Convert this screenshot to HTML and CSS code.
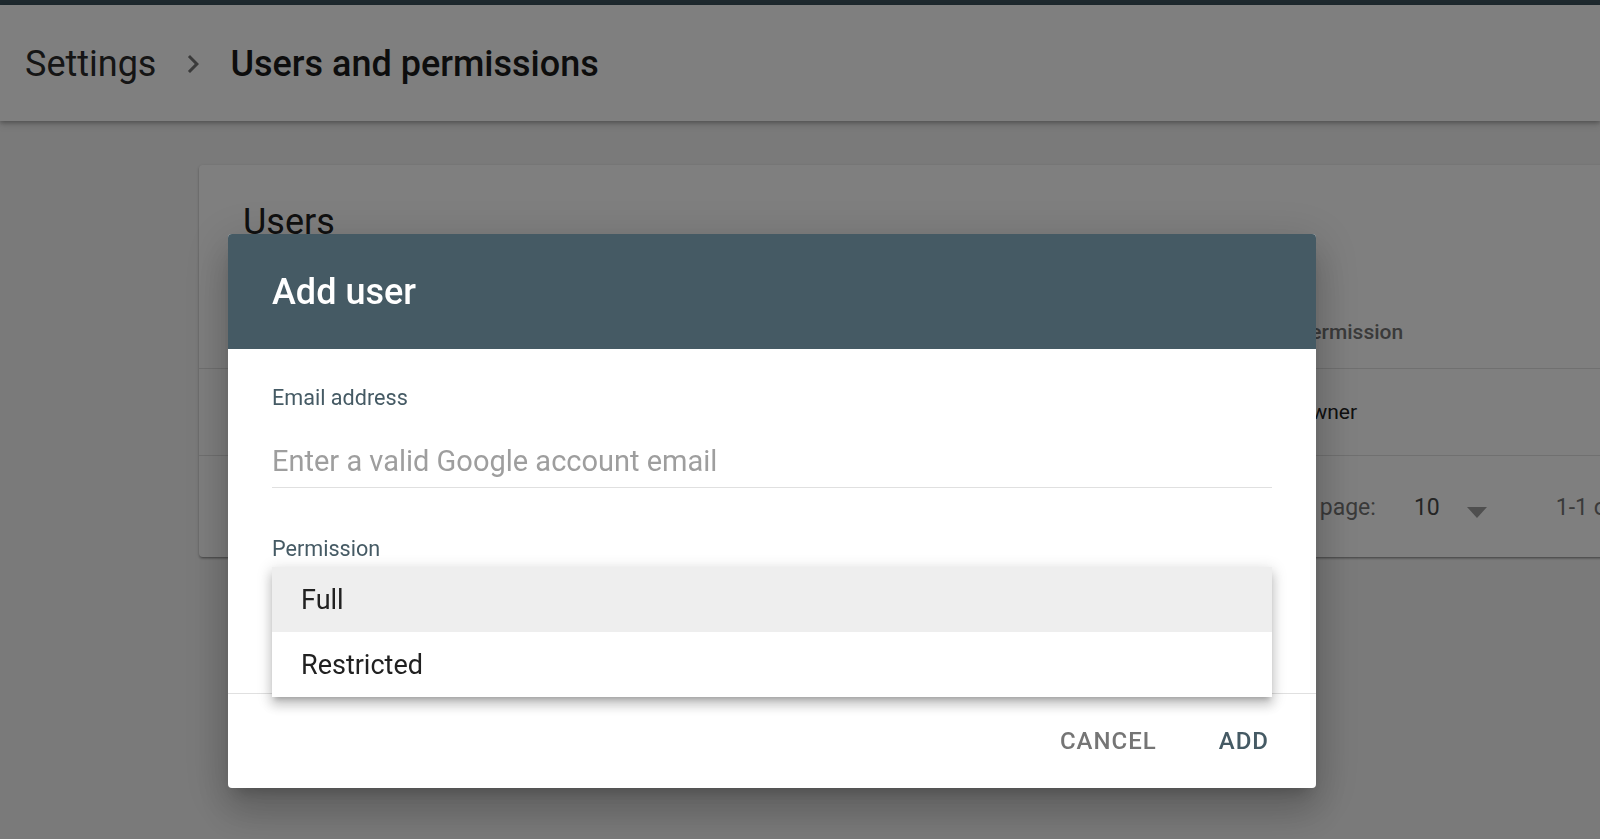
FILE: index.html
```html
<!DOCTYPE html>
<html lang="en">
<head>
<meta charset="utf-8">
<title>Users and permissions</title>
<link rel="stylesheet" href="styles.css">
</head>
<body>
<div class="app">
  <div class="topbar"></div>
  <header class="appbar">
    <span class="crumb">Settings</span>
    <svg class="crumb-sep" viewBox="0 0 24 24" width="36" height="36" aria-hidden="true"><path d="M10 6L8.59 7.41 13.17 12l-4.58 4.59L10 18l6-6z"/></svg>
    <span class="crumb current">Users and permissions</span>
  </header>
  <main class="content">
    <section class="card">
      <h2 class="card-title">Users</h2>
      <div class="table">
        <div class="row head"><span></span><span>Permission</span></div>
        <div class="row"><span></span><span>Owner</span></div>
      </div>
      <div class="table-footer">
        <span class="rows-label">Rows per page:</span>
        <span class="rows-value">10</span>
        <span class="rows-caret"></span>
        <span class="range">1-1 of 1</span>
        <svg class="pager" viewBox="0 0 24 24" width="36" height="36"><path d="M15.41 7.41L14 6l-6 6 6 6 1.41-1.41L10.83 12z"/></svg>
        <svg class="pager" viewBox="0 0 24 24" width="36" height="36"><path d="M10 6L8.59 7.41 13.17 12l-4.58 4.59L10 18l6-6z"/></svg>
      </div>
    </section>
  </main>
</div>

<div class="scrim"></div>

<div class="dialog-layer">
  <div class="dialog" role="dialog">
    <div class="dialog-header">Add user</div>
    <div class="dialog-body">
      <label class="field-label">Email address</label>
      <div class="input">Enter a valid Google account email</div>
      <label class="field-label perm-label">Permission</label>
      <div class="select-area"></div>
      <ul class="menu">
        <li class="menu-item active">Full</li>
        <li class="menu-item">Restricted</li>
      </ul>
    </div>
    <div class="dialog-footer">
      <button class="btn cancel">CANCEL</button>
      <button class="btn add">ADD</button>
    </div>
  </div>
</div>
</body>
</html>
```

FILE: styles.css
```css
* { box-sizing: border-box; }

html, body {
  margin: 0;
  padding: 0;
  width: 1600px;
  height: 839px;
  overflow: hidden;
  font-family: Roboto, "Liberation Sans", Arial, sans-serif;
  background: #f4f4f4;
  color: #212121;
}

.app {
  width: 1600px;
  height: 839px;
  display: flex;
  flex-direction: column;
  overflow: hidden;
}

.topbar {
  height: 5px;
  background: #3c535d;
  flex: none;
}

.appbar {
  height: 116px;
  flex: none;
  background: #ffffff;
  display: flex;
  align-items: center;
  padding: 2px 0 0 25px;
  box-shadow: 0 2px 4px rgba(0,0,0,0.25), 0 4px 8px rgba(0,0,0,0.1);
  position: relative;
  z-index: 1;
}

.crumb {
  font-size: 36px;
  line-height: 40px;
  color: #2b2b2b;
  font-weight: 400;
}

.crumb.current {
  font-weight: 500;
  color: #1a1a1a;
}

.crumb-sep {
  fill: #757575;
  margin: 0 19px 0 19px;
}

.content {
  flex: 1;
  padding: 44px 0 0 199px;
}

.card {
  width: 1572px;
  height: 392px;
  background: #ffffff;
  border-radius: 4px;
  box-shadow: 0 1px 3px rgba(0,0,0,0.2), 0 2px 2px rgba(0,0,0,0.14), 0 3px 1px -2px rgba(0,0,0,0.12);
  padding-top: 37px;
}

.card-title {
  margin: 0;
  padding-left: 44px;
  font-size: 36px;
  line-height: 40px;
  font-weight: 400;
  color: #212121;
}

.row {
  display: grid;
  grid-template-columns: 1054px 1fr;
  padding-left: 44px;
  border-bottom: 1px solid #e0e0e0;
  height: 87px;
  align-items: center;
  font-size: 21px;
  line-height: 24px;
  color: #212121;
}

.row.head {
  height: 127px;
  align-items: end;
  padding-bottom: 24px;
  font-weight: 500;
  color: #757575;
}

.table-footer {
  height: 101px;
  display: flex;
  align-items: center;
  padding-left: 1020px;
  padding-top: 2px;
  font-size: 23px;
  color: #757575;
  white-space: nowrap;
}

.rows-value {
  margin-left: 38px;
  color: #4a4a4a;
}

.rows-caret {
  margin-left: 27px;
  width: 0;
  height: 0;
  border-left: 10.5px solid transparent;
  border-right: 10.5px solid transparent;
  border-top: 11px solid #9e9e9e;
  margin-top: 10px;
}

.range {
  margin-left: 69px;
  color: #757575;
}

.pager {
  fill: #757575;
  margin-left: 30px;
  flex: none;
}

.scrim {
  position: fixed;
  inset: 0;
  background: rgba(0,0,0,0.5);
  z-index: 10;
}

.dialog-layer {
  position: fixed;
  inset: 0;
  z-index: 20;
  padding: 234px 0 0 228px;
}

.dialog {
  width: 1088px;
  background: #ffffff;
  border-radius: 4px;
  position: relative;
  box-shadow: 0 11px 15px -7px rgba(0,0,0,0.2), 0 24px 38px 3px rgba(0,0,0,0.14), 0 9px 46px 8px rgba(0,0,0,0.12);
}

.dialog-header {
  height: 115px;
  background: #455a64;
  color: #ffffff;
  border-radius: 4px 4px 0 0;
  display: flex;
  align-items: center;
  padding-left: 44px;
  font-size: 36px;
  font-weight: 500;
}

.dialog-body {
  padding: 37px 44px 0 44px;
  height: 344px;
}

.field-label {
  display: block;
  font-size: 21.6px;
  line-height: 24px;
  color: #455a64;
}

.input {
  margin-top: 31px;
  height: 47px;
  line-height: 40px;
  padding-bottom: 6px;
  border-bottom: 1px solid #e0e0e0;
  font-size: 29px;
  color: #9e9e9e;
}

.perm-label {
  margin-top: 49px;
}

.select-area {
  height: 100px;
}

.menu {
  position: absolute;
  top: 333px;
  left: 44px;
  right: 44px;
  margin: 0;
  padding: 0;
  list-style: none;
  background: #ffffff;
  box-shadow: 0 5px 5px -3px rgba(0,0,0,0.2), 0 8px 10px 1px rgba(0,0,0,0.14), 0 3px 14px 2px rgba(0,0,0,0.12);
  z-index: 2;
}

.menu-item {
  height: 65px;
  display: flex;
  align-items: center;
  padding-left: 29px;
  font-size: 27px;
  color: #212121;
}

.menu-item.active {
  background: #eeeeee;
}

.dialog-footer {
  height: 95px;
  border-top: 1px solid #e0e0e0;
  display: flex;
  align-items: center;
  justify-content: flex-end;
  gap: 30px;
  padding-right: 31px;
}

.btn {
  font-family: Roboto, "Liberation Sans", Arial, sans-serif;
  font-size: 24px;
  font-weight: 500;
  letter-spacing: 1px;
  height: 54px;
  padding: 0 16px;
  border: none;
  background: transparent;
  cursor: pointer;
}

.btn.cancel { color: #757575; }
.btn.add { color: #455a64; }
```
